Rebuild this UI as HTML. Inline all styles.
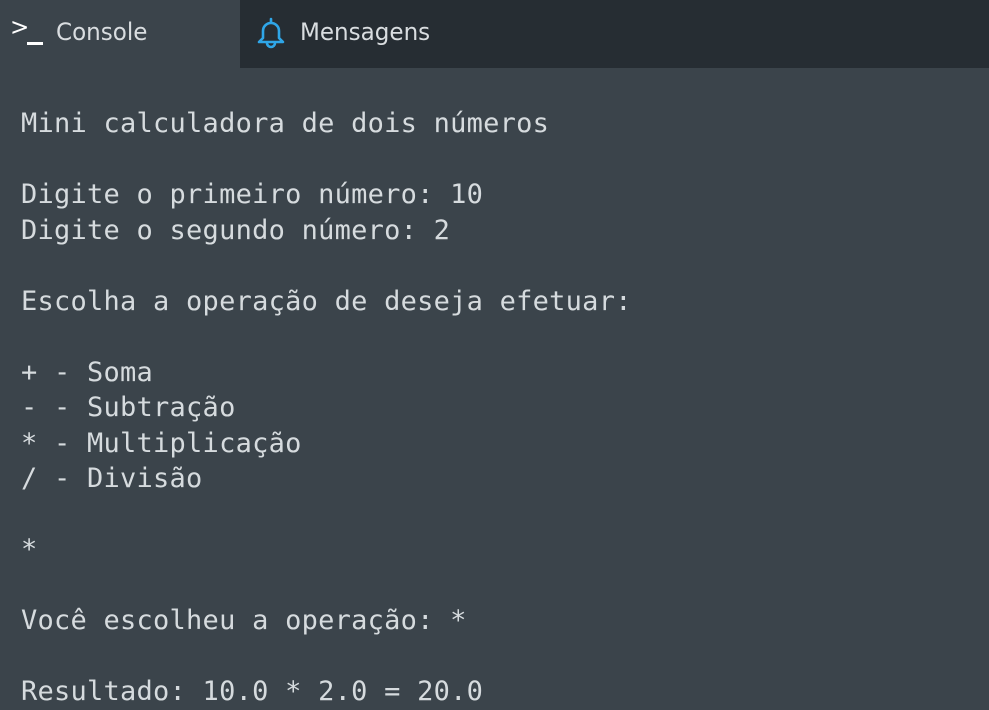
<!DOCTYPE html>
<html><head><meta charset="utf-8"><style>
body{margin:0;width:989px;height:708px;background:#3b444b;overflow:hidden;position:relative}
.bar{position:absolute;left:0;top:0;width:989px;height:68px;background:#262d33}
.tab1{position:absolute;left:0;top:0;width:240px;height:68px;background:#3b444b}
.t{position:absolute;font-family:"DejaVu Sans","Liberation Sans",sans-serif;font-size:24px;color:#d9dde0;top:18px;transform:scaleX(0.96);transform-origin:left}
pre{position:absolute;left:21px;top:106px;margin:0;font-family:"DejaVu Sans Mono","Liberation Mono",monospace;font-size:27px;line-height:35.5px;color:#d6dbde;letter-spacing:0.25px}
</style></head><body>
<div class="bar"></div><div class="tab1"></div>
<div class="t" style="left:10px;top:13px;color:#fff">&gt;</div>
<div style="position:absolute;left:27px;top:42px;width:16px;height:3px;background:#fff"></div>
<div class="t" style="left:56px">Console</div>
<svg style="position:absolute;left:254px;top:16px" width="34" height="34" viewBox="0 0 34 34"><path d="M17 3v3M9 22V15a8 8 0 0 1 16 0v7l4 4H5z M13 27a4 4 0 0 0 8 0" fill="none" stroke="#2fa6e8" stroke-width="2.6" stroke-linejoin="round" stroke-linecap="round"/></svg>
<div class="t" style="left:300px">Mensagens</div>
<pre>Mini calculadora de dois números

Digite o primeiro número: 10
Digite o segundo número: 2

Escolha a operação de deseja efetuar:

+ - Soma
- - Subtração
* - Multiplicação
/ - Divisão

*

Você escolheu a operação: *

Resultado: 10.0 * 2.0 = 20.0</pre>
</body></html>
